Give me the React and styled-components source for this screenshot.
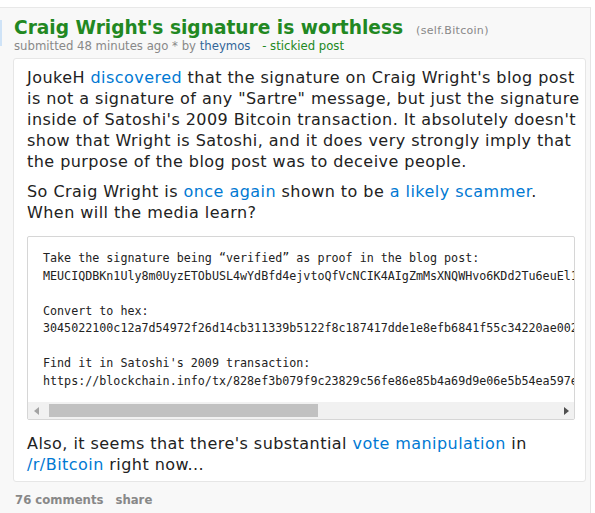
import React from "react";
import styled, { createGlobalStyle } from "styled-components";

const GlobalStyle = createGlobalStyle`
  body {
    margin: 0;
    background: #fff;
    font-family: "DejaVu Sans", Verdana, sans-serif;
  }
`;

const Page = styled.div`
  box-sizing: border-box;
  width: 591px;
  min-height: 506px;
  margin-top: 7px;
  border-top: 1px solid #e8e8e8;
  border-right: 1px solid #e4e4e4;
  background: #f8f8f8;
  padding: 9px 0 8px 13px;
  position: relative;
`;

const Edge = styled.div`
  position: absolute;
  left: 0;
  top: 12px;
  width: 2px;
  height: 26px;
  background: #cfe3f7;
`;

const TitleRow = styled.div`
  display: flex;
  align-items: baseline;
  gap: 13px;
  padding-left: 1px;
`;

const Title = styled.a`
  color: #228822;
  font-weight: bold;
  font-size: 18.6px;
  text-decoration: none;
`;

const Domain = styled.span`
  color: #888;
  font-size: 11px;
  letter-spacing: 0.3px;
`;

const Tagline = styled.div`
  color: #888;
  font-size: 11.7px;
  margin-top: 1px;
  padding-left: 1px;
`;

const Author = styled.a`
  color: #369;
  text-decoration: none;
  margin-right: 8px;
`;

const Stickied = styled.span`
  color: #228822;
`;

const UserText = styled.div`
  box-sizing: border-box;
  width: 573px;
  margin-top: 5px;
  background: #fff;
  border: 1px solid #e6e6e6;
  border-radius: 3px;
  padding: 8px 2px 6px 13px;
  color: #222;
  font-size: 16px;
  letter-spacing: 0.45px;
  line-height: 21px;
`;

const Para = styled.p`
  margin: 0 0 9px;
  &:last-child {
    margin-bottom: 0;
  }
`;

const Link = styled.a`
  color: #0079d3;
  text-decoration: none;
`;

const CodeBox = styled.div`
  margin: 13px 0 13px;
  width: 546px;
  border: 1px solid #d6d6d6;
  border-radius: 2px;
  background: #fff;
  letter-spacing: 0;
`;

const Pre = styled.pre`
  margin: 0;
  padding: 13px 0 12px 15px;
  overflow: hidden;
  white-space: pre;
  font-family: "DejaVu Sans Mono", "Liberation Mono", monospace;
  font-size: 11.7px;
  line-height: 17.5px;
  color: #222;
`;

const ScrollBar = styled.div`
  display: flex;
  align-items: center;
  height: 17px;
  background: #f1f1f1;
`;

const Arrow = styled.div`
  width: 17px;
  height: 17px;
  display: flex;
  align-items: center;
  justify-content: center;
`;

const Track = styled.div`
  flex: 1;
  height: 100%;
  display: flex;
  align-items: center;
`;

const Thumb = styled.div`
  height: 13px;
  margin-left: 4px;
  background: #c1c1c1;
`;

const Buttons = styled.div`
  display: flex;
  gap: 12px;
  margin-top: 11px;
  padding-left: 2px;
  font-size: 11.7px;
  font-weight: bold;
  color: #888;
`;

const code = `Take the signature being \u201cverified\u201d as proof in the blog post:
MEUCIQDBKn1Uly8m0UyzETObUSL4wYdBfd4ejvtoQfVcNCIK4AIgZmMsXNQWHvo6KDd2Tu6euEl13VTC3ihl6XUlhcU=

Convert to hex:
3045022100c12a7d54972f26d14cb311339b5122f8c187417dde1e8efb6841f55c34220ae0022066632c5cd4161efa3a2837764eee9eb84975dd54c2de2865e9752585c53e7cce

Find it in Satoshi's 2009 transaction:
https://blockchain.info/tx/828ef3b079f9c23829c56fe86e85b4a69d9e06e5b54ea597eef5fb3ffef509fe`;

const Triangle = ({ dir }) => (
  <svg width="6" height="8" viewBox="0 0 6 8">
    {dir === "left" ? (
      <path d="M5 0 L5 8 L0 4 Z" fill="#a3a3a3" />
    ) : (
      <path d="M1 0 L1 8 L6 4 Z" fill="#505050" />
    )}
  </svg>
);

export default function App() {
  return (
    <>
      <GlobalStyle />
      <Page>
        <Edge />
        <TitleRow>
          <Title href="#">Craig Wright's signature is worthless</Title>
          <Domain>(self.Bitcoin)</Domain>
        </TitleRow>
        <Tagline>
          submitted 48 minutes ago * by <Author href="#">theymos</Author>
          <Stickied> - stickied post</Stickied>
        </Tagline>
        <UserText>
          <Para>
            JoukeH <Link href="#">discovered</Link> that the signature on Craig
            Wright's blog post
            <br />
            is not a signature of any "Sartre" message, but just the signature
            <br />
            inside of Satoshi's 2009 Bitcoin transaction. It absolutely doesn't
            <br />
            show that Wright is Satoshi, and it does very strongly imply that
            <br />
            the purpose of the blog post was to deceive people.
          </Para>
          <Para>
            So Craig Wright is <Link href="#">once again</Link> shown to be{" "}
            <Link href="#">a likely scammer</Link>.
            <br />
            When will the media learn?
          </Para>
          <CodeBox>
            <Pre>{code}</Pre>
            <ScrollBar>
              <Arrow>
                <Triangle dir="left" />
              </Arrow>
              <Track>
                <Thumb style={{ width: "269px" }} />
              </Track>
              <Arrow>
                <Triangle dir="right" />
              </Arrow>
            </ScrollBar>
          </CodeBox>
          <Para>
            Also, it seems that there's substantial{" "}
            <Link href="#">vote manipulation</Link> in
            <br />
            <Link href="#">/r/Bitcoin</Link> right now...
          </Para>
        </UserText>
        <Buttons>
          <span>76 comments</span>
          <span>share</span>
        </Buttons>
      </Page>
    </>
  );
}
